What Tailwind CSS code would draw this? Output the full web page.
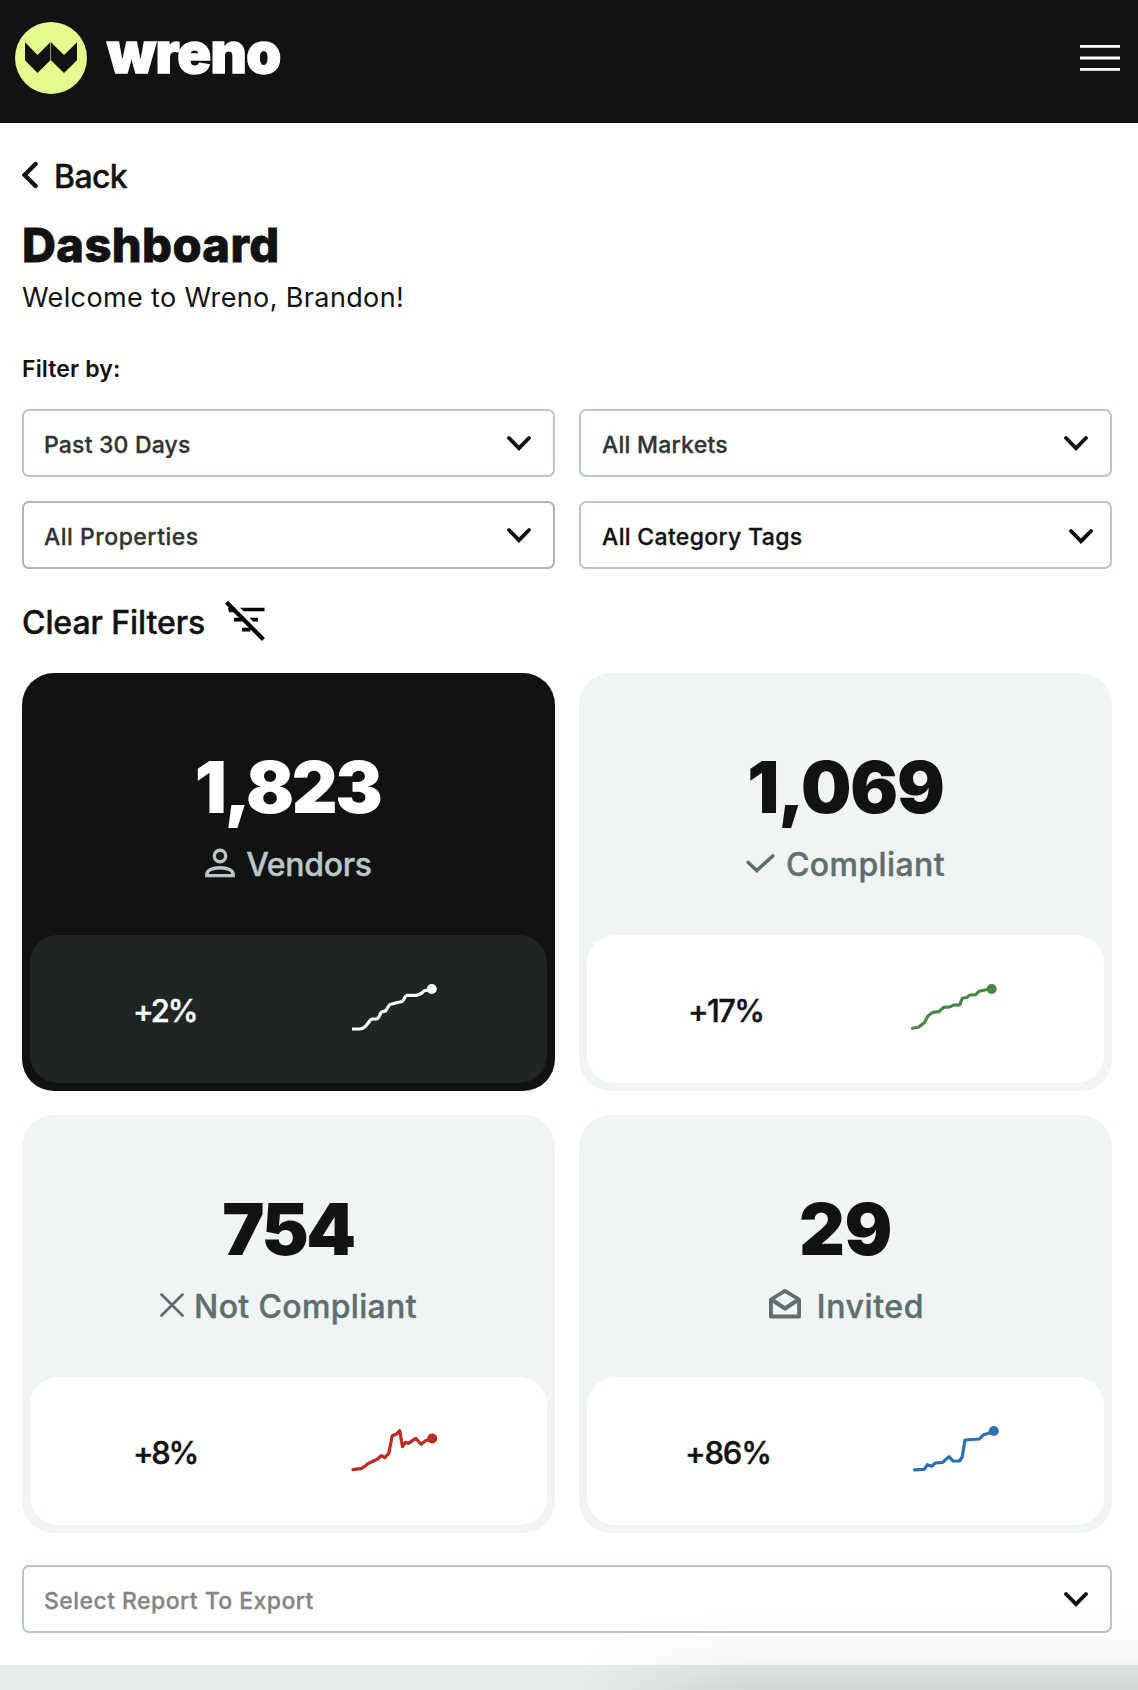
<!DOCTYPE html>
<html lang="en">
<head>
<meta charset="utf-8">
<title>Wreno Dashboard</title>
<script src="https://cdn.jsdelivr.net/npm/@tailwindcss/browser@4"></script>
</head>
<body class="bg-white font-['Inter',sans-serif] text-[#121212]">
<div class="relative flex h-[1690px] w-full flex-col overflow-hidden">

  <header class="flex h-[123px] shrink-0 items-start justify-between bg-[#121212] pl-[15px] pr-[18px] pt-[22px]">
    <div class="flex">
      <svg class="size-[72px]" viewBox="0 0 72 72"><circle cx="36" cy="36" r="36" fill="#e4fc8e"/><path fill="#121212" d="M10 20.3 22.5 33 35.4 20.3V38.3L22.5 51 10 38.3zM36 20.3 49 33 62 20.3V38.3L49 51 36 38.3z"/></svg>
      <span class="ml-[20px] text-[56px] font-black leading-[63px] tracking-[-0.7px] text-white [-webkit-text-stroke:1.4px_white]">wreno</span>
    </div>
    <svg class="mt-[22px] h-[28px] w-[40px]" viewBox="0 0 40 28" stroke="#fff" stroke-width="2.8"><path d="M0 2.400h40M0 14h40M0 25.400h40"/></svg>
  </header>

  <main class="flex flex-col px-[22px] pr-[26px]">
    <a class="mt-[33px] flex h-[40px] items-center">
      <svg class="mt-[-2px] h-[30px] w-[18px] shrink-0" viewBox="0 0 18 30" fill="none" stroke="#121212" stroke-width="4.400" stroke-linecap="round"><path d="M13.600 4 2.600 15l11 11"/></svg>
      <span class="ml-[14px] pt-[2px] text-[32px] font-medium leading-[40px] tracking-[-0.6px] [-webkit-text-stroke:0.4px_currentColor]">Back</span>
    </a>
    <h1 class="mt-[21px] text-[47px] font-extrabold leading-[56px] tracking-[0.4px] [-webkit-text-stroke:0.8px_currentColor]">Dashboard</h1>
    <p class="mt-[7px] text-[27px] leading-[36px] tracking-[0.37px]">Welcome to Wreno, Brandon!</p>
    <p class="mt-[37px] text-[23px] font-semibold leading-[32px] tracking-[0.14px]">Filter by:</p>

    <div class="mt-[24px] grid grid-cols-2 gap-[24px] text-[23px] font-medium leading-[32px] [-webkit-text-stroke:0.3px_currentColor]">
      <div class="flex h-[68px] items-center justify-between rounded-[7px] border-2 border-[#bac7c8] pl-[20px] pr-[22px]">
        <span class="pt-[3px] tracking-[0.18px] text-[#333]">Past 30 Days</span>
        <svg class="h-[16px] w-[24px]" viewBox="0 0 24 16" fill="none" stroke="#121212" stroke-width="3.8" stroke-linecap="round"><path d="M2 3 12 13.2 22 3"/></svg>
      </div>
      <div class="flex h-[68px] items-center justify-between rounded-[7px] border-2 border-[#bac7c8] pl-[21px] pr-[22px]">
        <span class="pt-[3px] tracking-[0.25px] text-[#333]">All Markets</span>
        <svg class="h-[16px] w-[24px]" viewBox="0 0 24 16" fill="none" stroke="#121212" stroke-width="3.8" stroke-linecap="round"><path d="M2 3 12 13.2 22 3"/></svg>
      </div>
      <div class="flex h-[68px] items-center justify-between rounded-[7px] border-2 border-[#b3b3b3] pl-[20px] pr-[22px]">
        <span class="pt-[3px] tracking-[0.5px] text-[#333]">All Properties</span>
        <svg class="h-[16px] w-[24px]" viewBox="0 0 24 16" fill="none" stroke="#121212" stroke-width="3.8" stroke-linecap="round"><path d="M2 3 12 13.2 22 3"/></svg>
      </div>
      <div class="flex h-[68px] items-center justify-between rounded-[7px] border-2 border-[#bac7c8] pl-[21px] pr-[17px]">
        <span class="pt-[3px] tracking-[0.33px]">All Category Tags</span>
        <svg class="mt-[2px] h-[16px] w-[24px]" viewBox="0 0 24 16" fill="none" stroke="#000" stroke-width="3.8" stroke-linecap="round"><path d="M2 3 12 13.2 22 3"/></svg>
      </div>
    </div>

    <div class="mt-[33px] flex h-[40px]">
      <span class="pt-px text-[32px] font-medium leading-[40px] tracking-[-0.08px] [-webkit-text-stroke:0.4px_currentColor]">Clear Filters</span>
      <svg class="ml-[19px] mt-[-2px] size-[42px]" viewBox="0 0 42 42"><path fill="#000" d="M16 7.7h24.500v3.6H19.6zM4 7.7h7v4.5H5zM10 17.8h11v3.6H10zM25.5 17.8H34v3.6h-4.9zM18 27.8h8.5v3.6H18z"/><path stroke="#000" stroke-width="4.2" d="M2.5 2.3 39.4 39.5"/></svg>
    </div>

    <div class="mt-[31px] grid grid-cols-2 gap-[24px]">
      <section class="flex h-[418px] flex-col items-center rounded-[32px] bg-[#121212] p-[8px] pt-[74px]">
        <div class="pr-[2px] text-[71px] font-black leading-[80px] tracking-[-2.5px] text-white">1,823</div>
        <div class="mt-[17px] flex h-[40px] items-center text-[#bac7c8]">
          <svg class="mt-[-3px] h-[32px] w-[30px]" viewBox="0 0 30 32" fill="none" stroke="currentColor" stroke-width="3.4"><circle cx="15" cy="9" r="5.7"/><path d="M1.8 28.6h26.4v-1.200c0-4.2-5.8-6.6-13.2-6.600S1.8 23.200 1.8 27.400z"/></svg>
          <span class="ml-[11px] pt-[2px] text-[32px] font-medium leading-[40px] tracking-[-0.3px] [-webkit-text-stroke:0.4px_currentColor]">Vendors</span>
        </div>
        <div class="mt-auto flex h-[148px] w-full items-center justify-between rounded-[28px] bg-[#1f2525] pl-[103px] pr-[107px]">
          <span class="pt-[5px] text-[31px] font-medium tracking-[-2.100px] text-white [-webkit-text-stroke:0.4px_currentColor]">+2%</span>
          <svg class="mt-[2px] h-[60px] w-[90px]" viewBox="0 0 90 60" fill="none"><path stroke="#fff" stroke-width="3.2" stroke-linejoin="round" d="M2 49h7q4 0 6.8-3l4-5.3q1-1.7 3-1.7h3q2.500 0 3.500-3l1-2.300q1-2 2.500-2t3-1l2.900-4.700q1-2 3-2t3-.7L52 21.500q1.500-.8 2.200-3t2.600-3.200h10l4.800-2 2.200-2.300 8-2"/><circle cx="81.800" cy="9" r="5" fill="#fff"/></svg>
        </div>
      </section>

      <section class="flex h-[418px] flex-col items-center rounded-[32px] bg-[#f0f4f5] p-[8px] pt-[74px]">
        <div class="text-[71px] font-black leading-[80px] tracking-[-1.25px]">1,069</div>
        <div class="mt-[17px] flex h-[40px] items-center text-[#5f6e6e]">
          <svg class="mt-[-3px] h-[22px] w-[29px]" viewBox="0 0 29 22" fill="none" stroke="currentColor" stroke-width="3.6" stroke-linecap="round"><path d="M2.200 10.500 10.800 18.500 26.700 4"/></svg>
          <span class="ml-[11px] pt-[2px] text-[32px] font-medium leading-[40px] tracking-[0.4px] [-webkit-text-stroke:0.4px_currentColor]">Compliant</span>
        </div>
        <div class="mt-auto flex h-[148px] w-full items-center justify-between rounded-[28px] bg-white pl-[101px] pr-[104px]">
          <span class="pt-[5px] text-[31px] font-medium tracking-[-1.700px] [-webkit-text-stroke:0.4px_currentColor]">+17%</span>
          <svg class="mt-[2px] h-[60px] w-[90px]" viewBox="0 0 90 60" fill="none"><path stroke="#48864a" stroke-width="3.2" stroke-linejoin="round" stroke-linecap="round" d="M2.500 48.300 9 47l5.600-4.700 3.500-6.500 4.900-3.500 6-.6 4.500-4.400 6.500-.4 3.600-1.800 6.200-.3 2.500-6.500 4.400-.8L60 15l5.700-.3 3.300-3.400 7.300-1.600 5.400-.7"/><circle cx="81.700" cy="9" r="5" fill="#48864a"/></svg>
        </div>
      </section>

      <section class="flex h-[418px] flex-col items-center rounded-[32px] bg-[#f0f4f5] p-[8px] pt-[74px]">
        <div class="pr-[1px] text-[71px] font-black leading-[80px] tracking-[-2.4px]">754</div>
        <div class="mt-[17px] flex h-[40px] items-center text-[#5f6e6e]">
          <svg class="mt-[-2px] size-[24px]" viewBox="0 0 24 24" stroke="currentColor" stroke-width="2.800" stroke-linecap="round"><path d="M1.500 1.500l21 21M22.500 1.500l-21 21"/></svg>
          <span class="ml-[10px] pt-[2px] text-[32px] font-medium leading-[40px] tracking-[0.34px] [-webkit-text-stroke:0.4px_currentColor]">Not Compliant</span>
        </div>
        <div class="mt-auto flex h-[148px] w-full items-center justify-between rounded-[28px] bg-white pl-[103px] pr-[107px]">
          <span class="pt-[5px] text-[31px] font-medium tracking-[-2.400px] [-webkit-text-stroke:0.4px_currentColor]">+8%</span>
          <svg class="mt-[2px] h-[60px] w-[90px]" viewBox="0 0 90 60" fill="none"><path stroke="#c02b21" stroke-width="3.2" stroke-linejoin="round" stroke-linecap="round" d="M3 47.700 12 46.300l6.700-5 8.600-4 4-3.600 3.400 2 4.100-4.400L42.200 13.700l4-1.400 3.500-3.600 2.800 16 2.900-4.400 2.900 1 7.400-5 5.300 6 4.500-3.600 6.900-2.400"/><circle cx="82.200" cy="16.500" r="5" fill="#c02b21"/></svg>
        </div>
      </section>

      <section class="flex h-[418px] flex-col items-center rounded-[32px] bg-[#f0f4f5] p-[8px] pt-[74px]">
        <div class="text-[71px] font-black leading-[80px] tracking-[-0.4px]">29</div>
        <div class="mt-[17px] flex h-[40px] items-center pl-[2px] text-[#5f6e6e]">
          <svg class="mt-[-5px] size-[32px]" viewBox="0 0 32 32" fill="none" stroke="currentColor" stroke-width="3.800" stroke-linejoin="round"><path d="M1.900 11.500 16 2.800l14.100 8.700V28.500H1.900z"/><path stroke-width="4.200" d="M2.500 11.500 16 20.500l13.500-9"/></svg>
          <span class="ml-[16px] pt-[2px] text-[32px] font-medium leading-[40px] tracking-[0.6px] [-webkit-text-stroke:0.4px_currentColor]">Invited</span>
        </div>
        <div class="mt-auto flex h-[148px] w-full items-center justify-between rounded-[28px] bg-white pl-[98px] pr-[104px]">
          <span class="pt-[5px] text-[31px] font-medium tracking-[-1.200px] [-webkit-text-stroke:0.4px_currentColor]">+86%</span>
          <svg class="mt-[2px] h-[60px] w-[90px]" viewBox="0 0 90 60" fill="none"><path stroke="#2f6fb7" stroke-width="3.2" stroke-linejoin="round" stroke-linecap="round" d="M4.500 47.800l10-.5 2.700-4.600 4.600 1.600 3.500-3.300 7.400-.7 6.300-5.700 4 4.400h6.500l2.700-4L55 18l14.500-1 4-4.300 5.100-1.400 5.200-2.600"/><circle cx="83.800" cy="9" r="5" fill="#2f6fb7"/></svg>
        </div>
      </section>
    </div>

    <div class="mt-[32px] flex h-[68px] items-center justify-between rounded-[7px] border-2 border-[#bac7c8] pl-[20px] pr-[22px] text-[23px] font-medium leading-[32px]">
      <span class="pt-[3px] tracking-[0.45px] text-[#858585] [-webkit-text-stroke:0.3px_currentColor]">Select Report To Export</span>
      <svg class="h-[16px] w-[24px]" viewBox="0 0 24 16" fill="none" stroke="#121212" stroke-width="3.8" stroke-linecap="round"><path d="M2 3 12 13.2 22 3"/></svg>
    </div>
  </main>

  <footer class="mt-[32px] h-[25px] shrink-0 bg-[#e6ecec]"></footer>
  <!-- soft shadow of the floating widget below the fold -->
  <div class="absolute left-[660px] top-[1720px] h-[400px] w-[700px] shadow-[0_0_96px_rgba(0,0,0,0.32)]"></div>
</div>
</body>
</html>
